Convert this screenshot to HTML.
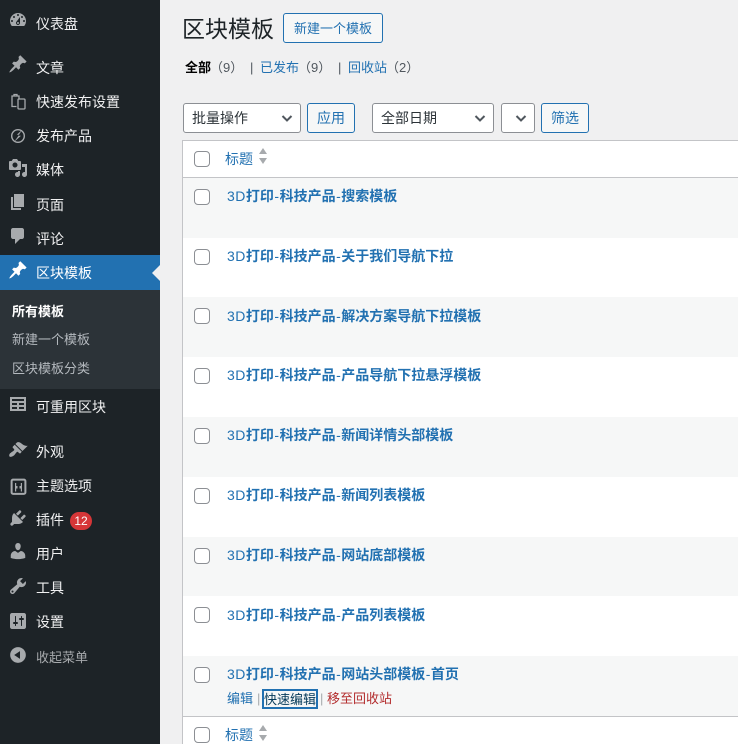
<!DOCTYPE html>
<html lang="zh-CN"><head><meta charset="utf-8"><title>区块模板</title>
<style>
html,body{margin:0;padding:0;width:738px;height:744px;overflow:hidden;background:#f0f0f1}
body{position:relative;font-family:"Liberation Sans","Noto Sans CJK SC",sans-serif;font-size:13px;color:#3c434a}
.a{position:absolute;white-space:nowrap}
#side{position:absolute;left:0;top:0;width:160px;height:744px;background:#1d2327}
.m{position:absolute;left:36px;font-size:14px;line-height:20px;color:#f0f0f1;white-space:nowrap}
.i{position:absolute;left:8px;width:20px;height:20px;fill:#a7aaad}
.s{position:absolute;left:12px;font-size:13px;line-height:18px;color:#b4b9be;white-space:nowrap}
.btn{position:absolute;box-sizing:border-box;border:1px solid #2271b1;border-radius:3px;background:#f6f7f7;color:#2271b1;text-align:center;font-size:13px;line-height:28px;height:30px}
.sel{position:absolute;box-sizing:border-box;border:1px solid #8c8f94;border-radius:3px;background:#fff;color:#2c3338;font-size:14px;line-height:28px;height:30px;padding-left:8px}
.sel svg{position:absolute;right:5px;top:6px;width:16px;height:16px}
.row{position:absolute;left:182px;width:556px;box-sizing:border-box;border-left:1px solid #c3c4c7}
.cb{position:absolute;left:194px;width:16px;height:16px;box-sizing:border-box;border:1px solid #8c8f94;border-radius:4px;background:#fff}
.t{position:absolute;left:227px;font-size:14px;line-height:20px;font-weight:700;color:#2271b1;white-space:nowrap}
.t i{font-style:normal;font-weight:400;letter-spacing:.5px}
.t u{text-decoration:none;padding:0 .5px;font-weight:400}
a{text-decoration:none}
</style></head><body>
<div id="side">
<svg class="i" style="top:10px" viewBox="0 0 20 20"><path d="M3.76 16h12.48c1.1-1.37 1.76-3.11 1.76-5 0-4.42-3.58-8-8-8s-8 3.58-8 8c0 1.89.66 3.63 1.76 5zM10 4c.55 0 1 .45 1 1s-.45 1-1 1-1-.45-1-1 .45-1 1-1zM6 6c.55 0 1 .45 1 1s-.45 1-1 1-1-.45-1-1 .45-1 1-1zm8 0c.55 0 1 .45 1 1s-.45 1-1 1-1-.45-1-1 .45-1 1-1zm-5.37 5.55L12 7v6c0 1.1-.9 2-2 2s-2-.9-2-2c0-.57.24-1.08.63-1.45zM4 10c.55 0 1 .45 1 1s-.45 1-1 1-1-.45-1-1 .45-1 1-1zm12 0c.55 0 1 .45 1 1s-.45 1-1 1-1-.45-1-1 .45-1 1-1zm-5 3c0-.55-.45-1-1-1s-1 .45-1 1 .45 1 1 1 1-.45 1-1z"/></svg>
<div class="m" style="top:14px">仪表盘</div>
<svg class="i" style="top:54px" viewBox="0 0 20 20"><path d="M10.44 3.02l1.82-1.82 6.36 6.35-1.83 1.82c-1.05-.68-2.48-.57-3.41.36l-.75.75c-.92.93-1.04 2.35-.35 3.41l-1.83 1.82-2.41-2.41-2.8 2.79c-.42.42-3.38 2.71-3.8 2.29s1.86-3.39 2.28-3.81l2.79-2.79L4.1 9.36l1.83-1.82c1.05.69 2.48.57 3.4-.36l.75-.75c.93-.92 1.05-2.35.36-3.41z"/></svg>
<div class="m" style="top:58px">文章</div>
<svg class="i" style="top:91px;fill:none;stroke:#a7aaad;stroke-width:1.3" viewBox="0 0 20 20"><path d="M8.500 15.500H4V5h7v3"/><path d="M6 5V3.500h3V5"/><rect x="10" y="8" width="7" height="10" rx="1"/></svg>
<div class="m" style="top:92px">快速发布设置</div>
<svg class="i" style="top:126px" viewBox="0 0 20 20"><circle cx="10" cy="10" r="6.300" fill="none" stroke="#a7aaad" stroke-width="1.400"/><path d="M14 4L8.800 8.800h2.400L6 16l7-6.200h-2.700z"/></svg>
<div class="m" style="top:126px">发布产品</div>
<svg class="i" style="top:158px" viewBox="0 0 20 20"><path d="M13 11V4c0-.55-.45-1-1-1h-1.670L9 1H5L3.670 3H2c-.55 0-1 .45-1 1v7c0 .55.45 1 1 1h10c.55 0 1-.45 1-1zM7 4.500c1.380 0 2.500 1.120 2.500 2.500S8.380 9.500 7 9.500 4.500 8.380 4.500 7 5.620 4.500 7 4.500zM14 6h5v10.500c0 1.380-1.120 2.500-2.500 2.500S14 17.880 14 16.500s1.120-2.500 2.500-2.500c.17 0 .34.020.5.050V9h-3V6zm-4 8.050V13h2v3.500c0 1.380-1.120 2.500-2.500 2.500S7 17.880 7 16.500 8.120 14 9.500 14c.17 0 .34.020.5.050z"/></svg>
<div class="m" style="top:160px">媒体</div>
<svg class="i" style="top:192px" viewBox="0 0 20 20"><path d="M6 15V2h10v13H6zm-1 1h8v2H3V5h2v11z"/></svg>
<div class="m" style="top:195px">页面</div>
<svg class="i" style="top:226px" viewBox="0 0 20 20"><path d="M5 2h9c1.100 0 2 .9 2 2v7c0 1.100-.9 2-2 2h-2l-5 5v-5H5c-1.100 0-2-.9-2-2V4c0-1.100.9-2 2-2z"/></svg>
<div class="m" style="top:229px">评论</div>
<div class="a" style="left:0;top:255px;width:160px;height:35px;background:#2271b1"></div>
<svg class="i" style="top:260px;fill:#fff" viewBox="0 0 20 20"><path d="M10.44 3.020l1.820-1.820 6.360 6.350-1.830 1.820c-1.050-.68-2.480-.57-3.410.36l-.75.75c-.92.93-1.040 2.350-.35 3.410l-1.830 1.820-2.410-2.410-2.800 2.790c-.42.42-3.380 2.710-3.800 2.290s1.860-3.390 2.280-3.810l2.790-2.790L4.100 9.360l1.830-1.820c1.050.69 2.480.57 3.400-.36l.75-.75c.93-.92 1.050-2.350.36-3.410z"/></svg>
<div class="m" style="top:263px;color:#fff">区块模板</div>
<div class="a" style="left:152px;top:265px;width:0;height:0;border:8px solid transparent;border-left:0;border-right-color:#f0f0f1"></div>
<div class="a" style="left:0;top:290px;width:160px;height:99px;background:#2c3338"></div>
<div class="s" style="top:303px;color:#fff;font-weight:700">所有模板</div>
<div class="s" style="top:331px">新建一个模板</div>
<div class="s" style="top:360px">区块模板分类</div>
<svg class="i" style="top:394px" viewBox="0 0 20 20"><path d="M18 17V3H2v14h16zM16 7H4V5h12v2zm-7 4H4V9h5v2zm7 0h-5V9h5v2zm-7 4H4v-2h5v2zm7 0h-5v-2h5v2z"/></svg>
<div class="m" style="top:397px">可重用区块</div>
<svg class="i" style="top:440px" viewBox="0 0 20 20"><path d="M14.480 11.060L7.410 3.990l1.500-1.500c.5-.56 2.300-.47 3.510.32 1.210.8 1.430 1.280 2.910 2.100 1.180.64 2.450 1.260 4.450.85zm-.71.71L6.700 4.700 4.930 6.470c-.39.39-.39 1.020 0 1.410l1.060 1.060c.39.39.39 1.030 0 1.420-.6.6-1.430 1.110-2.210 1.690-.35.26-.7.53-1.010.84C1.430 13.230.78 15.780 1.530 16.530c.75.75 3.300.1 4.640-1.240.31-.31.58-.66.84-1.010.58-.78 1.090-1.610 1.690-2.210.39-.39 1.030-.39 1.420 0l1.060 1.060c.39.39 1.020.39 1.410 0z"/></svg>
<div class="m" style="top:442px">外观</div>
<svg class="i" style="top:476px" viewBox="0 0 20 20"><rect x="3.600" y="3.600" width="13.800" height="14.300" rx="1.500" fill="none" stroke="#a7aaad" stroke-width="2"/><path d="M7 7h1.200v8.500H7zM8.200 10h1.300v2.500H8.200zM12.800 7H14v8.500h-1.200zM11.500 10h1.300v2.500h-1.300z"/></svg>
<div class="m" style="top:476px">主题选项</div>
<svg class="i" style="top:508px" viewBox="0 0 20 20"><path d="M13.110 4.360L9.870 7.600 8 5.730l3.240-3.240c.35-.34 1.050-.2 1.560.32.52.51.66 1.210.31 1.550zm-8 1.770l.91-1.120 9.010 9.010-1.190.84c-.71.71-2.630 1.160-3.820 1.160H6.140L4.900 17.260c-.59.59-1.540.59-2.120 0-.59-.58-.59-1.530 0-2.120l1.240-1.240v-3.880c0-1.130.4-3.190 1.090-3.890zm7.260 3.970l3.240-3.240c.34-.35 1.040-.21 1.550.31.52.51.66 1.210.31 1.550l-3.240 3.250z"/></svg>
<div class="m" style="top:510px">插件</div>
<div class="a" style="left:70px;top:512px;width:22px;height:18px;border-radius:9px;background:#d63638;color:#fff;font-size:12px;line-height:18px;text-align:center">12</div>
<svg class="i" style="top:541px" viewBox="0 0 20 20"><path d="M10 9.250c-2.270 0-2.730-3.440-2.730-3.440C7 4.020 7.820 2 9.970 2c2.160 0 2.980 2.020 2.710 3.810 0 0-.41 3.440-2.680 3.440zm0 2.570L12.720 10c2.390 0 4.520 2.330 4.520 4.530v2.490s-3.650 1.130-7.240 1.130c-3.650 0-7.240-1.130-7.240-1.130v-2.490c0-2.250 1.940-4.480 4.470-4.480z"/></svg>
<div class="m" style="top:544px">用户</div>
<svg class="i" style="top:576px" viewBox="0 0 20 20"><path d="M16.680 9.770c-1.340 1.340-3.300 1.670-4.950.99l-5.410 6.520c-.99.99-2.590.99-3.580 0s-.99-2.590 0-3.570l6.520-5.420c-.68-1.650-.35-3.610.99-4.950 1.280-1.280 3.120-1.620 4.720-1.060l-2.890 2.890 2.820 2.820 2.860-2.870c.53 1.580.18 3.390-1.080 4.650zM3.810 16.210c.4.39 1.040.39 1.430 0 .4-.4.4-1.040 0-1.430-.39-.4-1.030-.4-1.430 0-.39.39-.39 1.030 0 1.430z"/></svg>
<div class="m" style="top:578px">工具</div>
<svg class="i" style="top:611px" viewBox="0 0 20 20"><path d="M18 16V4c0-1.100-.9-2-2-2H4c-1.100 0-2 .9-2 2v12c0 1.100.9 2 2 2h12c1.100 0 2-.9 2-2zM8 11h1c.55 0 1 .45 1 1s-.45 1-1 1H8v1.500c0 .28-.22.5-.5.5s-.5-.22-.5-.5V13H6c-.55 0-1-.45-1-1s.45-1 1-1h1V5.500c0-.28.22-.5.5-.5s.5.22.5.5V11zm5-2h-1c-.55 0-1-.45-1-1s.45-1 1-1h1V5.500c0-.28.22-.5.5-.5s.5.22.5.5V7h1c.55 0 1 .45 1 1s-.45 1-1 1h-1v5.500c0 .28-.22.5-.5.5s-.5-.22-.5-.5V9z"/></svg>
<div class="m" style="top:612px">设置</div>
<svg class="i" style="top:645px" viewBox="0 0 20 20"><path d="M10 2.160c4.330 0 7.840 3.510 7.840 7.840s-3.510 7.840-7.840 7.840S2.160 14.330 2.160 10 5.710 2.160 10 2.160zm2 11.720V6.120L6.180 9.970z"/></svg>
<div class="m" style="top:648px;font-size:13px;color:#a7aaad">收起菜单</div>
</div>

<div class="a" style="left:183px;top:12px;font-size:23px;line-height:34px;color:#1d2327;margin-left:-1px">区块模板</div>
<div class="btn" style="left:283px;top:13px;width:100px;color:#2271b1;line-height:29px">新建一个模板</div>

<div class="a" style="left:185px;top:59px;line-height:18px;color:#000;font-weight:700">全部</div>
<div class="a" style="left:210px;top:59px;line-height:18px;color:#50575e">（9）</div>
<div class="a" style="left:250px;top:59px;line-height:18px;color:#50575e">|</div>
<div class="a" style="left:260px;top:59px;line-height:18px;color:#2271b1">已发布</div>
<div class="a" style="left:298px;top:59px;line-height:18px;color:#50575e">（9）</div>
<div class="a" style="left:338px;top:59px;line-height:18px;color:#50575e">|</div>
<div class="a" style="left:348px;top:59px;line-height:18px;color:#2271b1">回收站</div>
<div class="a" style="left:386px;top:59px;line-height:18px;color:#50575e">（2）</div>

<div class="sel" style="left:183px;top:103px;width:118px">批量操作<svg viewBox="0 0 16 16"><path d="M3.500 6l4.500 4.500 4.500-4.500" fill="none" stroke="#50575e" stroke-width="2"/></svg></div>
<div class="btn" style="left:307px;top:103px;width:48px;font-size:14px">应用</div>
<div class="sel" style="left:372px;top:103px;width:122px">全部日期<svg viewBox="0 0 16 16"><path d="M3.500 6l4.500 4.500 4.500-4.500" fill="none" stroke="#50575e" stroke-width="2"/></svg></div>
<div class="sel" style="left:501px;top:103px;width:34px"><svg viewBox="0 0 16 16"><path d="M3.500 6l4.500 4.500 4.500-4.500" fill="none" stroke="#50575e" stroke-width="2"/></svg></div>
<div class="btn" style="left:541px;top:103px;width:48px;font-size:14px">筛选</div>

<div class="row" style="top:140px;height:38px;background:#fff;border-top:1px solid #c3c4c7;border-bottom:1px solid #c3c4c7"></div>
<div class="row" style="top:178px;height:60px;background:#f6f7f7"></div>
<div class="row" style="top:238px;height:60px;background:#fff"></div>
<div class="row" style="top:297px;height:60px;background:#f6f7f7"></div>
<div class="row" style="top:357px;height:60px;background:#fff"></div>
<div class="row" style="top:417px;height:60px;background:#f6f7f7"></div>
<div class="row" style="top:477px;height:60px;background:#fff"></div>
<div class="row" style="top:537px;height:60px;background:#f6f7f7"></div>
<div class="row" style="top:596px;height:60px;background:#fff"></div>
<div class="row" style="top:656px;height:61px;background:#f6f7f7;border-bottom:1px solid #c3c4c7"></div>
<div class="row" style="top:717px;height:27px;background:#fff"></div>

<div class="cb" style="top:151px"></div>
<a class="a" style="left:225px;top:150px;line-height:18px;font-size:14px;color:#2271b1">标题</a>
<svg class="a" style="left:258px;top:148px" width="10" height="16" viewBox="0 0 10 16"><path d="M5 0l4 6H1zM5 16l4-6H1z" fill="#a7aaad"/></svg>

<div class="cb" style="top:189px"></div><a class="t" style="top:186px"><i>3D</i>打印<u>-</u>科技产品<u>-</u>搜索模板</a>
<div class="cb" style="top:249px"></div><a class="t" style="top:246px"><i>3D</i>打印<u>-</u>科技产品<u>-</u>关于我们导航下拉</a>
<div class="cb" style="top:308px"></div><a class="t" style="top:306px"><i>3D</i>打印<u>-</u>科技产品<u>-</u>解决方案导航下拉模板</a>
<div class="cb" style="top:368px"></div><a class="t" style="top:365px"><i>3D</i>打印<u>-</u>科技产品<u>-</u>产品导航下拉悬浮模板</a>
<div class="cb" style="top:428px"></div><a class="t" style="top:425px"><i>3D</i>打印<u>-</u>科技产品<u>-</u>新闻详情头部模板</a>
<div class="cb" style="top:488px"></div><a class="t" style="top:485px"><i>3D</i>打印<u>-</u>科技产品<u>-</u>新闻列表模板</a>
<div class="cb" style="top:548px"></div><a class="t" style="top:545px"><i>3D</i>打印<u>-</u>科技产品<u>-</u>网站底部模板</a>
<div class="cb" style="top:607px"></div><a class="t" style="top:605px"><i>3D</i>打印<u>-</u>科技产品<u>-</u>产品列表模板</a>
<div class="cb" style="top:667px"></div><a class="t" style="top:664px"><i>3D</i>打印<u>-</u>科技产品<u>-</u>网站头部模板<u>-</u>首页</a>

<div class="a" style="left:227px;top:690px;line-height:18px;color:#2271b1">编辑</div>
<div class="a" style="left:257px;top:690px;line-height:18px;color:#a7aaad">|</div>
<div class="a" style="left:262px;top:689px;width:56px;height:20px;box-sizing:border-box;border:2px solid #2271b1;line-height:17px;color:#043959;text-align:center">快速编辑</div>
<div class="a" style="left:320px;top:690px;line-height:18px;color:#a7aaad">|</div>
<div class="a" style="left:327px;top:690px;line-height:18px;color:#b32d2e">移至回收站</div>

<div class="cb" style="top:727px"></div>
<a class="a" style="left:225px;top:726px;line-height:18px;font-size:14px;color:#2271b1">标题</a>
<svg class="a" style="left:258px;top:725px" width="10" height="16" viewBox="0 0 10 16"><path d="M5 0l4 6H1zM5 16l4-6H1z" fill="#a7aaad"/></svg>
</body></html>
